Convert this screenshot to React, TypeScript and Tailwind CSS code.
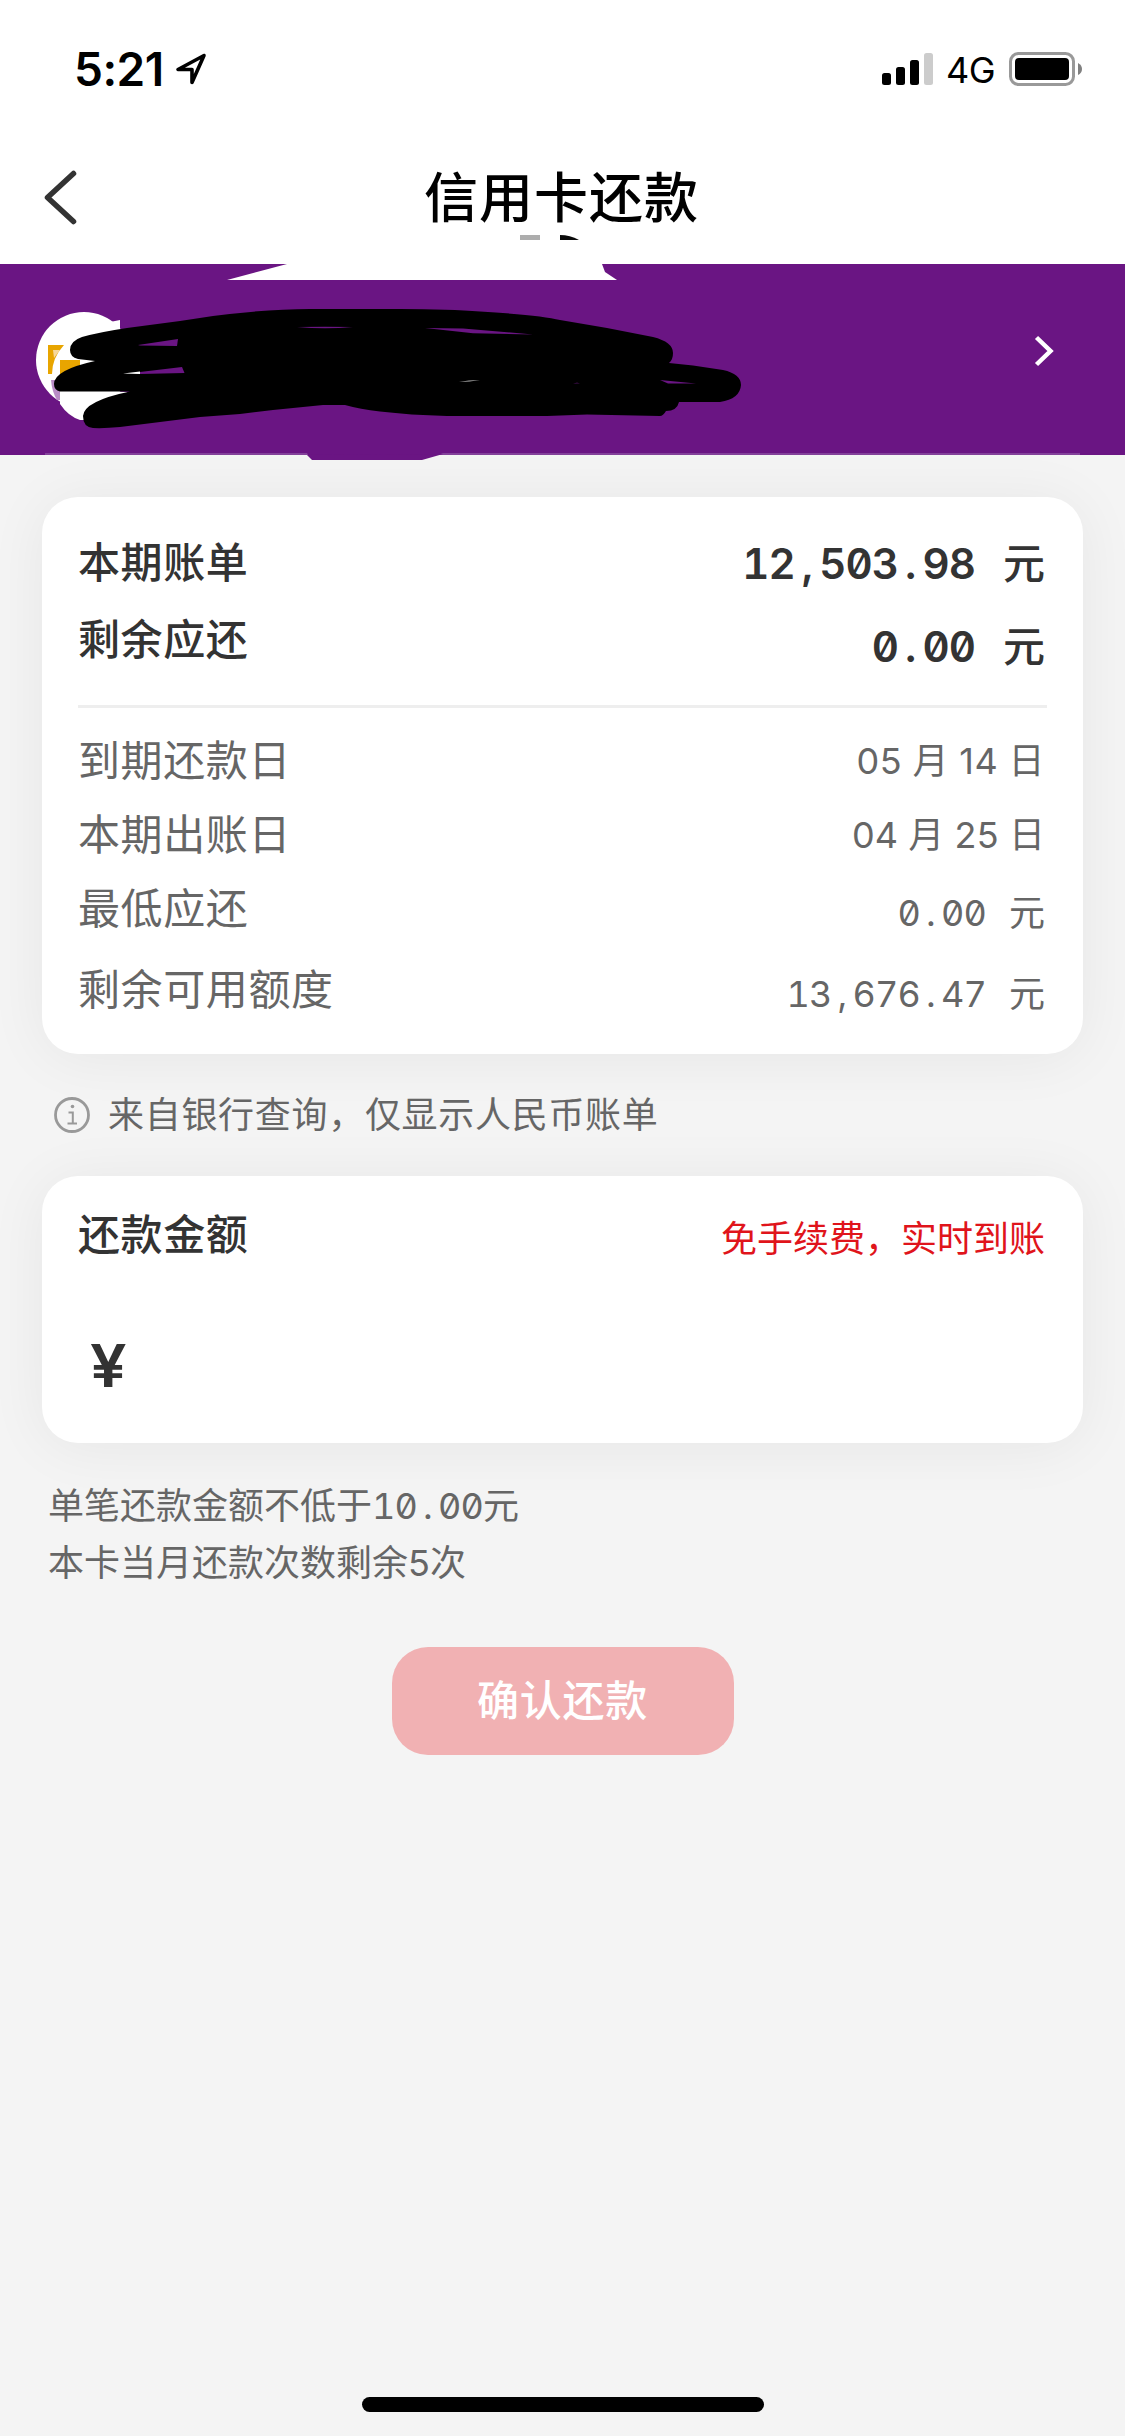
import type { ReactNode } from 'react';
import clsx from 'clsx';

interface BillRow {
  label: string;
  value: ReactNode;
  labelClass: string;
  valueClass: string;
}

// Digits sit on a fixed pitch, so the narrow separators get side padding
function Amount({ value, bold }: { value: string; bold?: boolean }) {
  return (
    <span
      className={clsx(
        "[font-feature-settings:'tnum','zero']",
        bold ? 'font-semibold tracking-[-0.9px]' : 'tracking-[-0.8px]'
      )}
    >
      {value.split(/([.,])/).map((part, i) =>
        part === '.' || part === ',' ? (
          <span key={i} className={bold ? 'px-[7px]' : 'px-[6px]'}>{part}</span>
        ) : (
          part
        )
      )}
    </span>
  );
}

const mainRows: BillRow[] = [
  {
    label: '本期账单',
    value: <><Amount value="12,503.98" bold /><span className="ml-[28px]">元</span></>,
    labelClass: 'mt-[36px]',
    valueClass: 'mt-[37px]',
  },
  {
    label: '剩余应还',
    value: <><Amount value="0.00" bold /><span className="ml-[28px]">元</span></>,
    labelClass: 'mt-[17px]',
    valueClass: 'mt-[23px]',
  },
];

const detailRows: BillRow[] = [
  { label: '到期还款日', value: '05 月 14 日', labelClass: 'h-[74px]', valueClass: 'h-[74px] tracking-[0.4px]' },
  { label: '本期出账日', value: '04 月 25 日', labelClass: 'h-[74px]', valueClass: 'h-[78px] tracking-[0.1px]' },
  {
    label: '最低应还',
    value: <><Amount value="0.00" /><span className="ml-[23px]">元</span></>,
    labelClass: 'h-[81px]',
    valueClass: 'h-[81px]',
  },
  {
    label: '剩余可用额度',
    value: <><Amount value="13,676.47" /><span className="ml-[23px]">元</span></>,
    labelClass: 'h-[60px]',
    valueClass: 'h-[60px]',
  },
];

function StatusBar() {
  return (
    <div className="flex h-[132px] items-start justify-between pl-[74px] pr-[42px] pt-[52px]">
      <div className="flex items-start">
        <span className="w-[101px] text-[46px] font-semibold leading-[34px] tracking-[-0.5px]">5:21</span>
        <svg width="32" height="34" viewBox="0 0 32 34" fill="none" stroke="#000" strokeWidth="3.6" strokeLinejoin="round">
          <path d="M29 3.500 L3 17.500 H17 V30.500 Z" />
        </svg>
      </div>
      <div className="flex items-start">
        <svg width="52" height="34" viewBox="0 0 52 34">
          <rect x="0" y="21" width="9" height="12" rx="2.5" />
          <rect x="14" y="15" width="9" height="18" rx="2.5" />
          <rect x="28" y="8" width="9" height="25" rx="2.5" />
          <rect x="42" y="1" width="9" height="32" rx="2.5" fill="#cccccc" />
        </svg>
        <span className="ml-[12px] w-[63px] text-[36px] leading-[36px] tracking-[-0.5px]">4G</span>
        <svg width="74" height="34" viewBox="0 0 74 34">
          <rect x="1.5" y="1.5" width="63" height="31" rx="8" fill="none" stroke="#999999" strokeWidth="3" />
          <rect x="6" y="6" width="54" height="22" rx="4" />
          <path d="M69 11 Q73 13 73 17 T69 23 Z" fill="#808080" />
        </svg>
      </div>
    </div>
  );
}

function CardBanner() {
  return (
    <div className="relative h-[191px] bg-[#6a1583]">
      <svg className="absolute left-0 top-[-32px]" width="1125" height="230" viewBox="0 232 1125 230">
        {/* leftovers around the header edge */}
        <rect x="520" y="235" width="20" height="5" fill="#adadad" />
        <path d="M560 235 Q570 235 579 240 H560 Z" fill="#0a0a0a" />
        <path d="M227 280 L287 264 H602 L605 272 L617 280 Z" fill="#fff" />
        <path d="M45 453 H307 L308 455 H45 Z M443 453 H1080 V455 H438 Z" fill="#83419a" />
        <path d="M307 455 L312 460 H422 L443 454 Z" fill="#6a1583" />

        {/* bank logo */}
        <circle cx="84" cy="360" r="48" fill="#fff" />
        <path d="M110 322 L120 320 V340 H105 Z M60 390 V404 Q68 416 80 420 H90 L128 392 Z" fill="#fff" />
        <path d="M48 345 H64 Q52 358 52 374 H48 Z" fill="#e8a500" />
        <path d="M53 350 H60 L54 358 Z" fill="#f6d79a" />
        <rect x="60" y="360" width="20" height="14" fill="#e8a500" />
        <path d="M51 380 H60 V400 H57 Q52 392 51 380 Z" fill="#b98cc6" />
        <path d="M120 340 H140 V371 H120 Z" fill="#000" />

        {/* marker strokes over the card name */}
        <path
          d="M70 350 Q70 341 82 337 Q100 332 127 328 L180 321 L213 316 Q267 309 310 309 H400 Q450 309 480 311.500 Q540 315 560 320 L607 328 L653 337 Q673 342 673 353 Q673 360 669 363 L693 365.500 L723 370 Q741 374 741 385 Q740 399 720 402 H679 Q677 411 666 411 Q663 416 660 416 L587 414.500 L547 416 H447 Q410 415 380 411.500 Q360 409 345 405 H323 L273 410 L240 414 L200 417 L160 422 L120 427 Q105 428.500 93 428 Q83 427 83 416 Q84 401 130 391.500 H60 Q54 390 54 384 Q54 370 95 361 L78 359 Q70 357 70 350 Z"
          fill="#000"
        />
        <path d="M138 345 L178 339 L177 346 L140 345.500 Z" fill="#6a1583" />
        <path d="M140 372 L182 367 L184.500 373 L140 374 Z" fill="#6a1583" />
        <path d="M123 373.500 L140 371.500 V374 Z" fill="#fff" />
        <path d="M297 327 Q325 329.500 353 327 Q325 326.500 297 327 Z" fill="#6a1583" />
        <path d="M425 328 L463 328.500 L533 334.500 L473 333.300 Z" fill="#6a1583" />
        <path d="M660 380 L696 383.500 H668 Z" fill="#6a1583" />
        <path d="M459 382 Q468 380 480 380 Q470 382 459 382 Z" fill="#aaa" />
        <path d="M573 383.700 L577 382.500 L580 383.500 Z" fill="#3d0d4c" />

        <path d="M1036.500 337.500 L1050.500 351 L1036.500 364.500" fill="none" stroke="#fff" strokeWidth="4.500" />
      </svg>
    </div>
  );
}

function BillCard() {
  return (
    <section className="mx-[42px] mt-[42px] h-[557px] rounded-[36px] bg-white px-[36px] shadow-[0_4px_60px_rgba(0,0,0,0.06)]">
      <div className="flex h-[208px] justify-between text-[42px] font-medium leading-[60px] text-[#333333]">
        <div className="flex flex-col">
          {mainRows.map((row) => (
            <span key={row.label} className={clsx('tracking-[0.6px]', row.labelClass)}>{row.label}</span>
          ))}
        </div>
        <div className="flex flex-col items-end pr-[2px]">
          {mainRows.map((row) => (
            <span key={row.label} className={clsx('whitespace-nowrap', row.valueClass)}>{row.value}</span>
          ))}
        </div>
      </div>
      <div className="h-[3px] bg-[#eeeeee]" />
      <div className="flex justify-between pt-[23px] text-[#666666]">
        <div className="flex flex-col text-[42px] leading-[60px]">
          {detailRows.map((row) => (
            <span key={row.label} className={clsx('tracking-[0.6px]', row.labelClass)}>{row.label}</span>
          ))}
        </div>
        <div className="flex flex-col items-end pr-[2px] text-[36px] leading-[60px]">
          {detailRows.map((row) => (
            <span key={row.label} className={clsx('whitespace-nowrap', row.valueClass)}>{row.value}</span>
          ))}
        </div>
      </div>
    </section>
  );
}

function AmountCard() {
  return (
    <section className="mx-[42px] h-[267px] rounded-[36px] bg-white px-[36px] shadow-[0_4px_60px_rgba(0,0,0,0.06)]">
      <div className="flex justify-between pt-[29px] leading-[60px]">
        <span className="text-[42px] font-medium tracking-[0.6px] text-[#333333]">还款金额</span>
        <span className="mr-[2px] mt-[4px] text-[36px] text-[#e0141b]">免手续费，实时到账</span>
      </div>
      <div className="ml-[12px] mt-[61px] w-fit origin-left scale-x-110 text-[59px] font-semibold leading-[72px] text-[#333333]">¥</div>
    </section>
  );
}

export default function App() {
  return (
    <div className="flex h-[2436px] w-[1125px] flex-col overflow-hidden bg-[#f4f4f4] font-['Inter','Noto_Sans_CJK_SC',sans-serif] text-black">
      <header className="h-[264px] bg-white">
        <StatusBar />
        <div className="grid h-[132px] grid-cols-[1fr_auto_1fr] items-start">
          <svg className="ml-[42px] mt-[36px]" width="40" height="60" viewBox="0 0 40 60" fill="none" stroke="#333333" strokeWidth="5.500" strokeLinecap="round" strokeLinejoin="round">
            <path d="M31.500 5.500 L5.500 29.500 L31.500 53.500" />
          </svg>
          <h1 className="-ml-[2px] mt-[27px] text-[54px] font-medium leading-[80px] tracking-[1px]">信用卡还款</h1>
        </div>
      </header>
      <CardBanner />
      <BillCard />

      <div className="flex h-[122px] items-start pl-[54px] pt-[31px] text-[#666666]">
        <svg className="mt-[12px]" width="36" height="36" viewBox="0 0 36 36" fill="none" stroke="#999999">
          <circle cx="18" cy="18" r="16.500" strokeWidth="2.800" />
          <circle cx="18.500" cy="9.500" r="1.800" fill="#999999" stroke="none" />
          <path d="M14.500 15.500 H18.800 V26 M13.500 26.500 H23" strokeWidth="2" />
        </svg>
        <span className="ml-[18px] text-[36px] leading-[60px] tracking-[0.7px]">来自银行查询，仅显示人民币账单</span>
      </div>

      <AmountCard />

      <div className="flex flex-col pl-[48px] pt-[35px] text-[36px] leading-[57px] text-[#666666]">
        <span>单笔还款金额不低于<Amount value="10.00" />元</span>
        <span>本卡当月还款次数剩余5次</span>
      </div>

      <button className="mx-auto mt-[55px] h-[108px] w-[342px] shrink-0 rounded-[36px] bg-[#f1b1b3] text-[42px] font-medium leading-[60px] tracking-[0.8px] text-white">
        确认还款
      </button>

      <div className="mx-auto mb-[24px] mt-auto h-[15px] w-[402px] rounded-full bg-black" />
    </div>
  );
}
